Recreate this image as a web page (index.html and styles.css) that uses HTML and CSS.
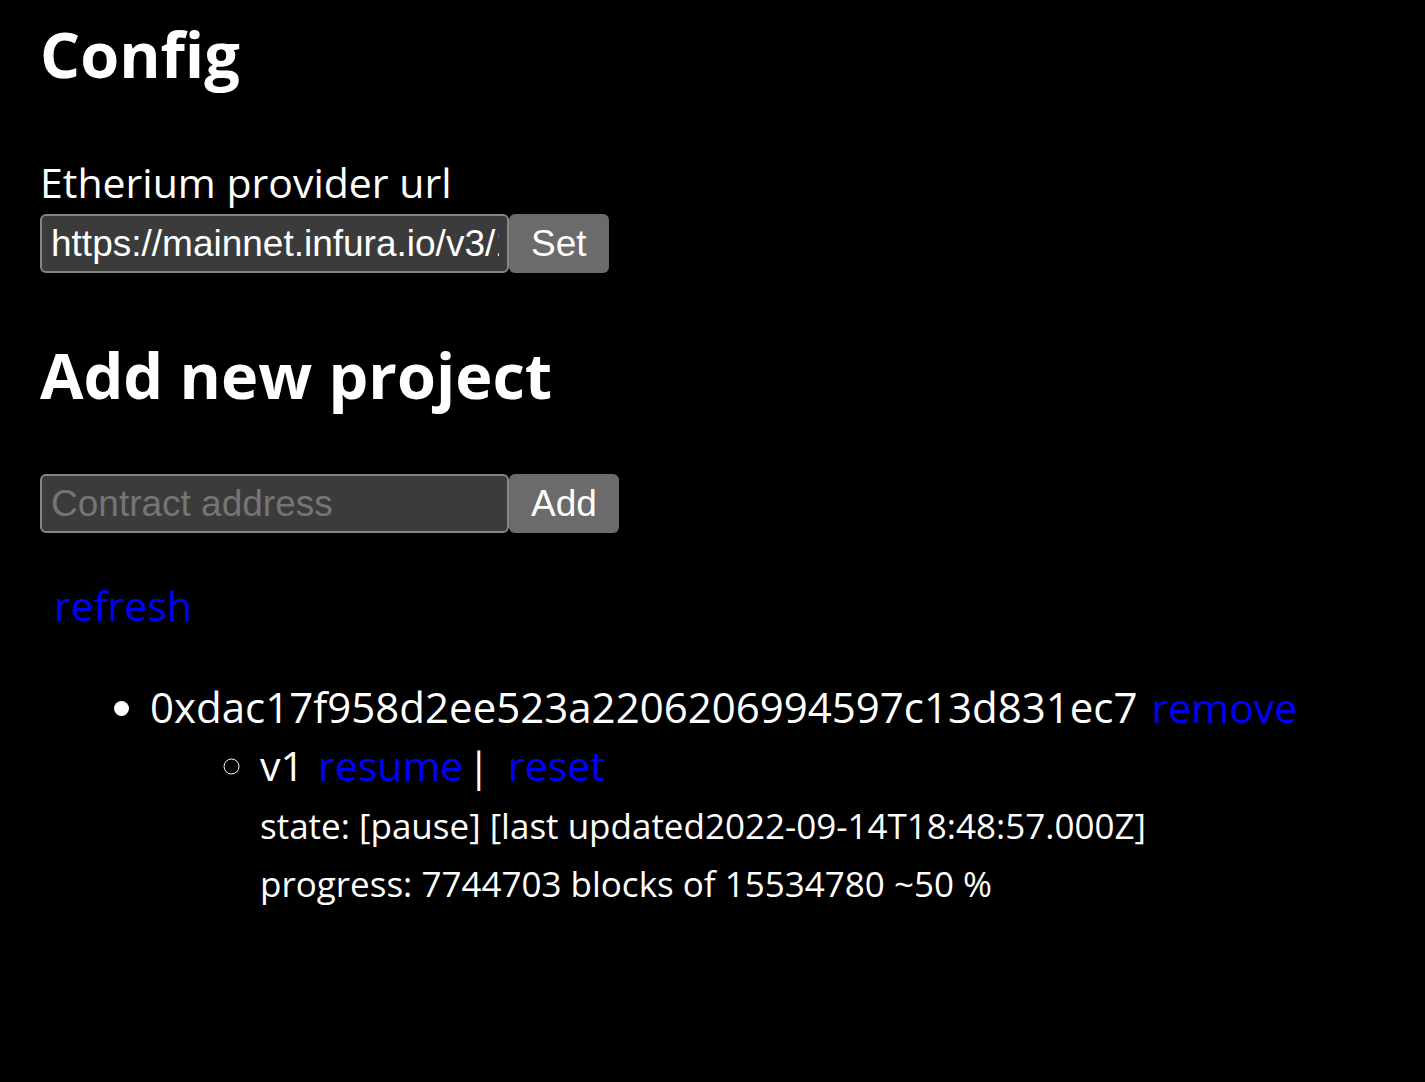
FILE: index.html
```html
<!DOCTYPE html>
<html lang="en">
<head>
<meta charset="utf-8">
<title>Config</title>
<link rel="stylesheet" href="styles.css">
</head>
<body>
<main class="page">
  <h1 class="heading">Config</h1>
  <form class="provider">
    <label class="label" for="provider-url">Etherium provider url</label>
    <div class="field-row">
      <input class="field" id="provider-url" type="text" value="https://mainnet.infura.io/v3/1">
      <button class="button" type="button">Set</button>
    </div>
  </form>
  <h1 class="heading">Add new project</h1>
  <form class="field-row">
    <input class="field" type="text" placeholder="Contract address" aria-label="Contract address">
    <button class="button" type="button">Add</button>
  </form>
  <p class="toolbar"><a class="link" href="#refresh">refresh</a></p>
  <ul class="projects">
    <li>
      <div class="line"><span class="address">0xdac17f958d2ee523a2206206994597c13d831ec7</span><a class="link" href="#remove">remove</a></div>
      <ul class="versions">
        <li>
          <div class="line"><span class="version">v1</span><a class="link" href="#resume">resume</a><span class="divider">|</span><a class="link" href="#reset">reset</a></div>
          <div class="details">
            <div>state: [pause] [last updated2022-09-14T18:48:57.000Z]</div>
            <div>progress: 7744703 blocks of 15534780 ~50 %</div>
          </div>
        </li>
      </ul>
    </li>
  </ul>
</main>
</body>
</html>
```
FILE: styles.css
```css
* { box-sizing: border-box; }
body {
  margin: 0;
  background: #000;
  color: #fff;
  font-family: "Segoe UI", "Open Sans", "Noto Sans", sans-serif;
  font-size: 41px;
  line-height: 58px;
}
.page { padding: 12px 40px; }
.heading { margin: 0 0 57px; font-size: 63px; line-height: 84px; font-weight: 700; }
.provider { margin-bottom: 60px; }
.label { display: block; margin-bottom: 3px; }
.field-row { display: flex; }
.field {
  width: 469px;
  height: 59px;
  padding: 0 8px 0 9px;
  border: 2px solid #858585;
  border-radius: 6px;
  background: #3b3b3b;
  color: #fff;
  font: 37px "Liberation Sans", Arial, sans-serif;
}
.field::placeholder { color: #757575; opacity: 1; }
.button {
  height: 59px;
  padding: 0 22px;
  border: 0;
  border-radius: 6px;
  background: #6b6b6b;
  color: #fff;
  font: 37px "Liberation Sans", Arial, sans-serif;
}
.toolbar { margin: 43px 0 44px; padding-left: 14px; }
.link { color: #00f; text-decoration: none; }
.projects, .versions { margin: 0; padding-left: 110px; }
.line { display: flex; white-space: nowrap; }
.address { margin-right: 14px; font-size: 42px; }
.version { margin-right: 14px; }
.divider { margin: 0 18px 0 4px; }
.details { padding-top: 3px; font-size: 35px; }
```
